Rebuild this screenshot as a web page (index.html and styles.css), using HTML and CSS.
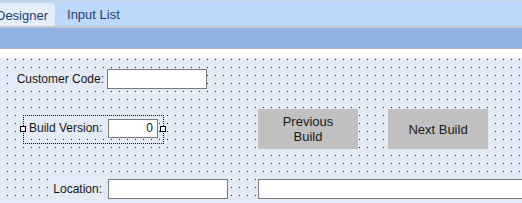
FILE: index.html
```html
<!DOCTYPE html>
<html>
<head>
<meta charset="utf-8">
<link rel="stylesheet" href="styles.css">
</head>
<body>
<div class="tabs">
  <div class="tab tab-active">Designer</div>
  <div class="tab">Input List</div>
</div>
<div class="band"></div>
<div class="gap"></div>
<div class="canvas">
  <div class="row row1">
    <div class="lbl lbl-cc">Customer Code:</div>
    <div class="input input-cc"></div>
  </div>
  <div class="row row2">
    <div class="sel">
      <span class="handle handle-l"></span>
      <div class="lbl lbl-bv">Build Version:</div>
      <div class="input input-num">0</div>
      <span class="handle handle-r"></span>
    </div>
    <div class="btn btn-prev">Previous<br>Build</div>
    <div class="btn btn-next">Next Build</div>
  </div>
  <div class="row row3">
    <div class="lbl lbl-loc">Location:</div>
    <div class="input input-loc"></div>
    <div class="input input-wide"></div>
  </div>
</div>
</body>
</html>
```
FILE: styles.css
```css
html, body {
  margin: 0;
  padding: 0;
}
body {
  width: 522px;
  height: 203px;
  overflow: hidden;
  background: #ffffff;
  font-family: "Liberation Sans", Arial, sans-serif;
}
.tabs {
  display: flex;
  height: 25px;
  background: #bcd9fb;
  border-top: 1px solid #c6d0de;
  border-bottom: 2px solid #c5cad6;
  overflow: hidden;
}
.tab {
  font-size: 13px;
  color: #1d3c74;
  line-height: 27px;
  padding: 0 7px;
  white-space: nowrap;
  flex: none;
}
.tab-active {
  margin-left: -11px;
  margin-top: 2px;
  line-height: 25px;
  background: #e4edf8;
  border-top-right-radius: 4px;
}
.tab + .tab {
  padding-left: 12px;
}
.band {
  height: 20px;
  background: #92b3df;
  border-bottom: 1px solid #a9b5c9;
}
.gap {
  height: 9px;
  background: #fdfdfb;
}
.canvas {
  height: 145px;
  background-color: #e3ebf6;
  background-image: conic-gradient(from 270deg at 1px 1px, #1a1a1a 25%, transparent 0);
  background-size: 8px 8px;
  background-position: 7px 1px;
  overflow: hidden;
  padding-top: 11px;
  box-sizing: border-box;
}
.row {
  display: flex;
  align-items: flex-start;
  white-space: nowrap;
}
.row2 {
  margin-top: 20px;
  height: 40px;
}
.row3 {
  margin-top: 30px;
}
.lbl {
  font-size: 12px;
  color: #161616;
  line-height: 20px;
  height: 20px;
  text-align: right;
  background: #e3ebf6;
  box-sizing: border-box;
  flex: none;
}
.lbl-cc {
  margin-left: 13px;
  width: 93px;
  padding-right: 2px;
}
.lbl-loc {
  margin-left: 48px;
  width: 58px;
  padding-right: 4px;
}
.lbl-bv {
  width: 79px;
  text-align: left;
  line-height: 19px;
  height: 19px;
}
.input {
  height: 20px;
  background: #ffffff;
  border: 1px solid #7b7b7b;
  box-sizing: border-box;
  flex: none;
}
.input-cc {
  margin-left: 1px;
  width: 100px;
}
.input-loc {
  margin-left: 2px;
  width: 120px;
}
.input-wide {
  margin-left: 30px;
  width: 300px;
}
.input-num {
  width: 50px;
  height: 19px;
  font-size: 12px;
  color: #161616;
  line-height: 17px;
  text-align: right;
  padding-right: 4px;
}
.sel {
  position: relative;
  display: flex;
  align-items: flex-start;
  flex: none;
  margin-left: 23px;
  margin-top: 6px;
  width: 141px;
  height: 29px;
  padding: 3px 0 0 5px;
  box-sizing: border-box;
  border: 1px dotted #111111;
}
.handle {
  position: absolute;
  top: 10px;
  width: 6px;
  height: 6px;
  background: #ffffff;
  border: 1px solid #000000;
  box-sizing: border-box;
}
.handle-l {
  left: -4px;
}
.handle-r {
  right: -3px;
}
.btn {
  width: 100px;
  height: 40px;
  background: #c0c0c0;
  font-size: 13px;
  color: #1a1a1a;
  display: flex;
  align-items: center;
  justify-content: center;
  text-align: center;
  line-height: 15px;
  flex: none;
}
.btn-prev {
  margin-left: 94px;
}
.btn-next {
  margin-left: 30px;
}
```
